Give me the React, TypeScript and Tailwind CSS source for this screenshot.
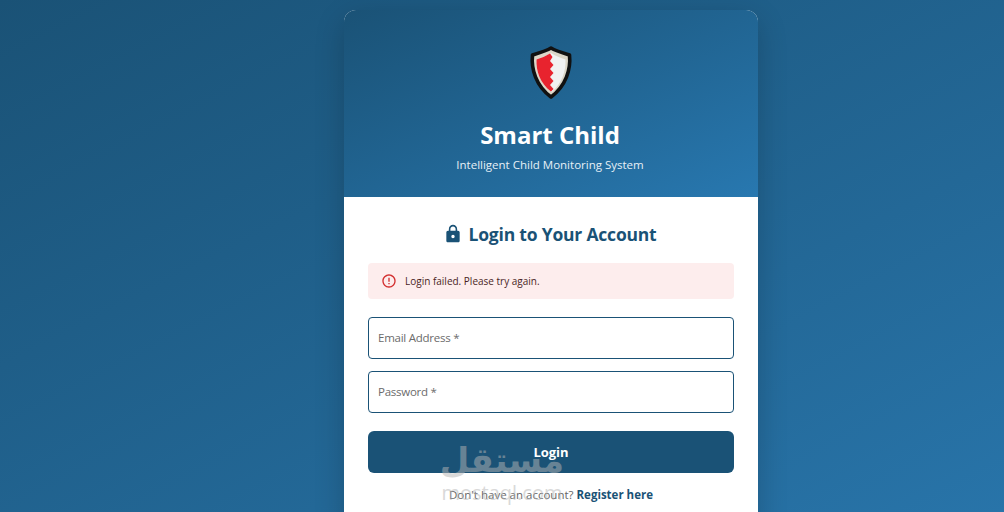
import React from "react";
import { MdErrorOutline, MdLock } from "react-icons/md";

const Shield = () => (
  <svg width="44" height="56" viewBox="0 0 44 56" fill="none">
    <path
      d="M22 3C27 6 34 8 40.5 10C42 24 37 41 22 52C7 41 2 24 3.5 10C10 8 17 6 22 3Z"
      fill="#dcd6c8"
      stroke="#111111"
      strokeWidth="3.6"
      strokeLinejoin="round"
    />
    <path
      d="M22 8C26 11 32 13 36.5 14.5C37 26 33 38 23 47C11 38 7 26 7.5 14.5C12 13 18 11 22 8Z"
      fill="#f1f1f1"
    />
    <path
      d="M21 8.5C17 11 12 13 7.5 14.5C7 26 11 38 22 46.5L24.5 44L21 40L24.5 36L21 32L24.5 28L21 24L24.5 20L21 16L23.5 12Z"
      fill="#e8232e"
    />
  </svg>
);

const Field = ({ label }: { label: string }) => (
  <div className="flex h-[42px] items-center rounded border border-[#1a5276] bg-white px-[9px] text-[11.5px] tracking-[-0.25px] text-[#6b6b6b]">
    {label}
  </div>
);

export default function App() {
  return (
    <div className="flex h-[512px] w-full overflow-hidden bg-gradient-to-br from-[#1a5276] to-[#2874a9] pl-[344px] font-['Open_Sans','Noto_Sans',sans-serif]">
      <div className="mt-[10px] h-[560px] w-[414px] shrink-0 overflow-hidden rounded-xl bg-white shadow-[0_10px_30px_rgba(0,0,0,0.2)]">
        <div className="flex h-[187px] flex-col items-center bg-gradient-to-br from-[#1a5276] to-[#2878b0] pt-[35px] text-white">
          <Shield />
          <h1 className="mt-[17px] pr-[2px] text-[24px] leading-[34px] font-bold">Smart Child</h1>
          <p className="mt-[3px] pr-[2px] text-[11.5px] leading-[20px] text-[#e6f0f7]">
            Intelligent Child Monitoring System
          </p>
        </div>
        <div className="relative flex flex-col px-6">
          <h2 className="mt-[24px] flex h-[26px] items-center justify-center gap-[5px] pr-[2px] text-[17.5px] font-bold tracking-[-0.2px] text-[#1a5276]">
            <MdLock size={20} />
            Login to Your Account
          </h2>
          <div className="mt-[16px] flex h-[36px] items-center gap-[8px] rounded bg-[#fdeded] px-[13px] text-[10px] text-[#4a1f1e]">
            <MdErrorOutline size={16} className="text-[#d32f2f]" />
            Login failed. Please try again.
          </div>
          <div className="mt-[18px] flex flex-col gap-3">
            <Field label="Email Address *" />
            <Field label="Password *" />
          </div>
          <button className="mt-[18px] h-[42px] rounded-md bg-[#1a5276] pt-[2px] text-[13px] font-bold text-white">
            Login
          </button>
          <p className="mt-[13px] text-center text-[11.5px] leading-[18px] text-[#666666]">
            Don't have an account?{" "}
            <span className="font-bold text-[#1a5276]">Register here</span>
          </p>
          <div className="pointer-events-none absolute top-[240px] left-[98px] flex w-[120px] flex-col items-center text-[#b4b4b4] opacity-50">
            <span className="font-['DejaVu_Sans',sans-serif] text-[34px] leading-[46px] font-bold">مستقل</span>
            <span className="text-[20px] leading-[20px]">mostaql.com</span>
          </div>
        </div>
      </div>
    </div>
  );
}
